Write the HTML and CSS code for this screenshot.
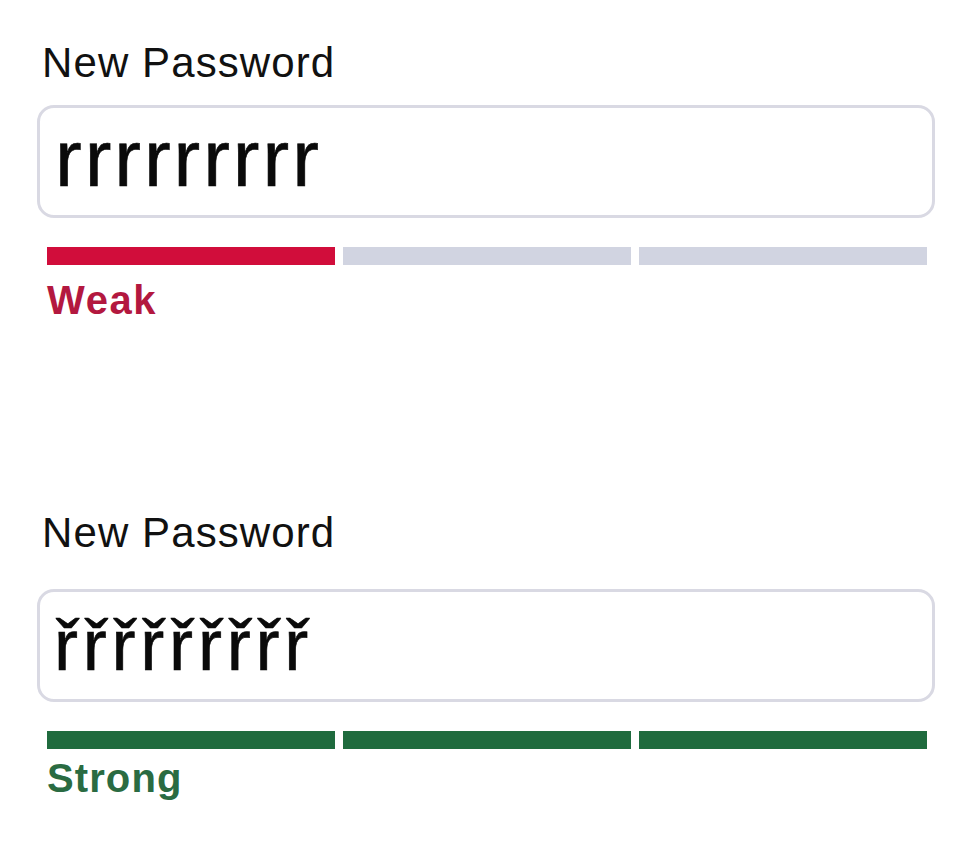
FILE: index.html
```html
<!DOCTYPE html>
<html lang="en">
<head>
<meta charset="utf-8">
<title>New Password</title>
<link rel="stylesheet" href="styles.css">
</head>
<body>
  <div class="page">
    <section class="field field-weak">
      <div class="label">New Password</div>
      <div class="input"><span class="value value-plain">rrrrrrrrr</span></div>
      <div class="meter">
        <span class="seg seg-weak"></span>
        <span class="seg"></span>
        <span class="seg"></span>
      </div>
      <div class="status status-weak">Weak</div>
    </section>
    <section class="field field-strong">
      <div class="label">New Password</div>
      <div class="input"><span class="value value-caron">řřřřřřřřř</span></div>
      <div class="meter">
        <span class="seg seg-strong"></span>
        <span class="seg seg-strong"></span>
        <span class="seg seg-strong"></span>
      </div>
      <div class="status status-strong">Strong</div>
    </section>
  </div>
</body>
</html>
```

FILE: styles.css
```css
html, body {
  margin: 0;
  padding: 0;
  background: #ffffff;
}

body {
  font-family: "Liberation Sans", Arial, sans-serif;
  color: #111111;
}

.page {
  width: 960px;
  height: 850px;
  padding: 0 25px 0 37px;
  box-sizing: border-box;
  overflow: hidden;
}

.field {
  display: flex;
  flex-direction: column;
}

.field-weak {
  padding-top: 42px;
}

.field-strong {
  padding-top: 192px;
}

.label {
  font-size: 42px;
  line-height: 42px;
  letter-spacing: 1.1px;
  padding-left: 5px;
  color: #111111;
}

.field-weak .label {
  margin-bottom: 21px;
}

.field-strong .label {
  margin-bottom: 35px;
}

.input {
  height: 113px;
  box-sizing: border-box;
  border: 3px solid #d9d9e3;
  border-radius: 17px;
  background: #ffffff;
  padding-left: 15px;
  color: #0a0a0a;
}

.field-weak .input {
  padding-top: 11px;
}

.field-strong .input {
  padding-top: 17px;
  padding-left: 14px;
}

.value {
  display: block;
  white-space: nowrap;
  -webkit-text-stroke: 0.6px #0a0a0a;
}

.value-plain {
  font-size: 80px;
  line-height: 80px;
  letter-spacing: 3px;
}

.value-caron {
  font-size: 72px;
  line-height: 72px;
  letter-spacing: 4.8px;
}

.meter {
  display: grid;
  grid-template-columns: repeat(3, 1fr);
  column-gap: 8px;
  margin: 29px 8px 0 10px;
}

.seg {
  display: block;
  height: 18px;
  background: #d1d4e1;
}

.seg-weak {
  background: #d10d3b;
}

.seg-strong {
  background: #1f6b3e;
}

.status {
  font-weight: bold;
  font-size: 40px;
  line-height: 40px;
  padding-left: 10px;
}

.status-weak {
  margin-top: 15px;
  color: #b3183f;
  letter-spacing: 1.6px;
}

.status-strong {
  margin-top: 9px;
  color: #2a6b42;
  letter-spacing: 1.1px;
}
```
